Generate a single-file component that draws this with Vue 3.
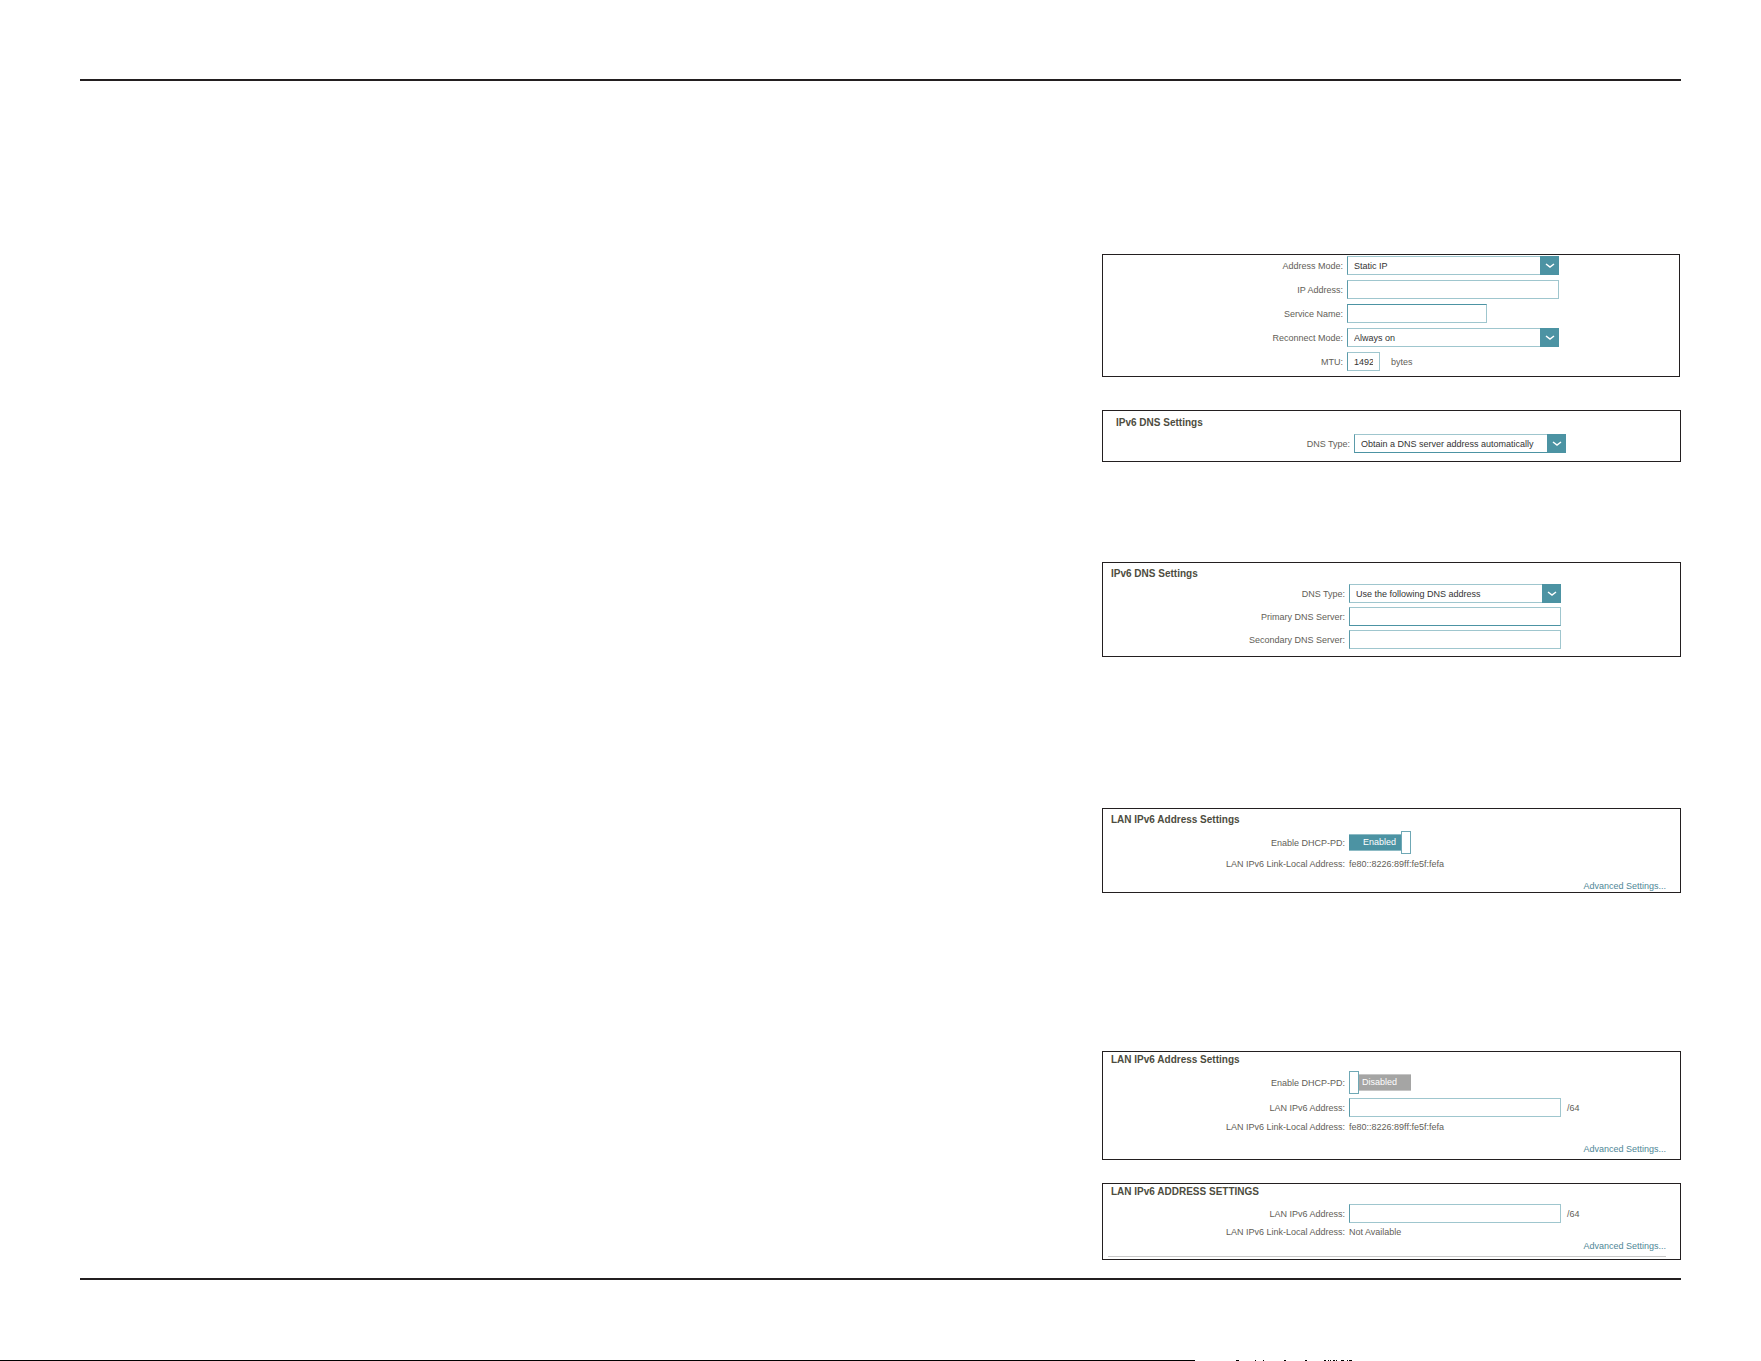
<script setup>
import { ref } from 'vue'

const addressMode = ref('Static IP')
const reconnectMode = ref('Always on')
const mtu = ref('1492')
const dnsAuto = ref('Obtain a DNS server address automatically')
const dnsManual = ref('Use the following DNS address')
const pdOn = ref(true)
const pdOff = ref(false)

// Visible tops of the clipped caption along the lower edge: [x, width]
const marks = [[0, 3], [19, 1], [27, 1], [48, 2], [69, 2], [88, 2], [92, 1], [94, 1], [97, 2], [100, 1], [105, 3], [111, 1], [113, 3]]
</script>

<template>
  <div class="page">
    <main class="sheet">
      <div class="column">
        <form class="panel mode" @submit.prevent>
          <div class="row">
            <label for="address-mode">Address Mode:</label>
            <div class="select">
              <select id="address-mode" v-model="addressMode"><option>Static IP</option></select>
              <svg viewBox="0 0 19 19" aria-hidden="true"><path d="M6 8l4 3 4-3" /></svg>
            </div>
          </div>
          <div class="row">
            <label for="ip-address">IP Address:</label>
            <input id="ip-address" type="text" class="field" />
          </div>
          <div class="row">
            <label for="service-name">Service Name:</label>
            <input id="service-name" type="text" class="field medium" />
          </div>
          <div class="row">
            <label for="reconnect">Reconnect Mode:</label>
            <div class="select">
              <select id="reconnect" v-model="reconnectMode"><option>Always on</option></select>
              <svg viewBox="0 0 19 19" aria-hidden="true"><path d="M6 8l4 3 4-3" /></svg>
            </div>
          </div>
          <div class="row">
            <label for="mtu">MTU:</label>
            <div class="with-unit mtu">
              <input id="mtu" v-model="mtu" type="text" class="field small" />
              <span>bytes</span>
            </div>
          </div>
        </form>

        <form class="panel dns-auto" @submit.prevent>
          <h2>IPv6 DNS Settings</h2>
          <div class="row">
            <label for="dns-auto">DNS Type:</label>
            <div class="select">
              <select id="dns-auto" v-model="dnsAuto"><option>Obtain a DNS server address automatically</option></select>
              <svg viewBox="0 0 19 19" aria-hidden="true"><path d="M6 8l4 3 4-3" /></svg>
            </div>
          </div>
        </form>

        <form class="panel dns-manual" @submit.prevent>
          <h2>IPv6 DNS Settings</h2>
          <div class="row">
            <label for="dns-manual">DNS Type:</label>
            <div class="select">
              <select id="dns-manual" v-model="dnsManual"><option>Use the following DNS address</option></select>
              <svg viewBox="0 0 19 19" aria-hidden="true"><path d="M6 8l4 3 4-3" /></svg>
            </div>
          </div>
          <div class="row">
            <label for="dns-primary">Primary DNS Server:</label>
            <input id="dns-primary" type="text" class="field" />
          </div>
          <div class="row">
            <label for="dns-secondary">Secondary DNS Server:</label>
            <input id="dns-secondary" type="text" class="field" />
          </div>
        </form>

        <form class="panel lan-pd" @submit.prevent>
          <h2>LAN IPv6 Address Settings</h2>
          <div class="row">
            <label for="pd-on">Enable DHCP-PD:</label>
            <div class="toggle" :class="{ on: pdOn }">
              <input id="pd-on" v-model="pdOn" type="checkbox" role="switch" />
              <span>{{ pdOn ? 'Enabled' : 'Disabled' }}</span>
            </div>
          </div>
          <div class="row">
            <span class="caption">LAN IPv6 Link-Local Address:</span>
            <span>fe80::8226:89ff:fe5f:fefa</span>
          </div>
          <a href="#" class="advanced">Advanced Settings...</a>
        </form>

        <form class="panel lan-manual" @submit.prevent>
          <h2>LAN IPv6 Address Settings</h2>
          <div class="row">
            <label for="pd-off">Enable DHCP-PD:</label>
            <div class="toggle" :class="{ on: pdOff }">
              <input id="pd-off" v-model="pdOff" type="checkbox" role="switch" />
              <span>{{ pdOff ? 'Enabled' : 'Disabled' }}</span>
            </div>
          </div>
          <div class="row">
            <label for="lan-address">LAN IPv6 Address:</label>
            <div class="with-unit">
              <input id="lan-address" type="text" class="field" />
              <span>/64</span>
            </div>
          </div>
          <div class="row">
            <span class="caption">LAN IPv6 Link-Local Address:</span>
            <span>fe80::8226:89ff:fe5f:fefa</span>
          </div>
          <a href="#" class="advanced">Advanced Settings...</a>
        </form>

        <form class="panel lan-static" @submit.prevent>
          <h2>LAN IPv6 ADDRESS SETTINGS</h2>
          <div class="row">
            <label for="lan-static">LAN IPv6 Address:</label>
            <div class="with-unit">
              <input id="lan-static" type="text" class="field" />
              <span>/64</span>
            </div>
          </div>
          <div class="row">
            <span class="caption">LAN IPv6 Link-Local Address:</span>
            <span>Not Available</span>
          </div>
          <a href="#" class="advanced">Advanced Settings...</a>
          <hr />
        </form>
      </div>
    </main>

    <footer class="edge" aria-hidden="true">
      <div class="bar"></div>
      <div class="bits">
        <svg width="120" height="1" viewBox="0 0 120 1">
          <rect v-for="[x, w] in marks" :key="x" :x="x" :width="w" y="0" height="1" />
        </svg>
      </div>
    </footer>
  </div>
</template>

<style>
body {
  margin: 0;
  background: #fff;
}
</style>

<style scoped>
.page {
  box-sizing: border-box;
  min-height: 100vh;
  display: flex;
  flex-direction: column;
  padding-top: 79px;
  font: 9px/12px "Liberation Sans", Arial, sans-serif;
  color: #626057;
}

.sheet {
  margin: 0 80px;
  padding: 173px 0 18px;
  border-top: 2px solid #231f20;
  border-bottom: 2px solid #231f20;
  display: grid;
  grid-template-columns: 1022fr 579fr;
}

.column {
  grid-column: 2;
}

.panel {
  --label: 242px;
  --gap: 4px;
  box-sizing: border-box;
  border: 1px solid #231f20;
  display: flex;
  flex-direction: column;
}

.row {
  display: grid;
  grid-template-columns: var(--label) 1fr;
  column-gap: 4px;
  align-items: center;
}

.row + .row {
  margin-top: var(--gap);
}

.row > label,
.caption {
  text-align: right;
}

h2 {
  margin: 0 8px 5px;
  font-size: 10px;
  line-height: 12px;
  color: #4d4c40;
}

.field,
.select {
  box-sizing: border-box;
  width: 212px;
  height: 19px;
  border: 1px solid #9fc6ce;
  border-left-color: #5b9baa;
  background: #fff;
}

.field {
  margin: 0;
  padding: 0 6px;
  border-radius: 0;
  font: inherit;
  color: #333;
  outline: none;
}

.medium {
  width: 140px;
  border-top-color: #4c93a3;
}

.small {
  width: 33px;
}

.select {
  display: flex;
}

.select select {
  appearance: none;
  flex: 1;
  min-width: 0;
  margin: 0 -19px 0 0;
  padding: 0 19px 0 6px;
  border: 0;
  border-radius: 0;
  background: none;
  font: inherit;
  color: #333;
}

.select svg {
  width: 19px;
  height: 19px;
  margin: -1px -1px 0 0;
  background: #4c93a3;
  pointer-events: none;
  z-index: 1;
}

.select path {
  fill: none;
  stroke: #fff;
  stroke-width: 1.5;
}

.with-unit {
  display: flex;
  align-items: center;
  gap: 6px;
}

.mtu {
  gap: 11px;
}

.toggle {
  display: flex;
  align-items: center;
  width: 62px;
}

.toggle input {
  appearance: none;
  box-sizing: border-box;
  width: 10px;
  height: 23px;
  margin: 0;
  border: 1px solid #6fa8b5;
  background: #fff;
}

.toggle span {
  box-sizing: border-box;
  flex: 1;
  height: 17px;
  padding-left: 3px;
  border: 1px solid #c6c6c6;
  border-width: 1px 0;
  line-height: 15px;
  color: #fff;
  background: #a5a5a4;
}

.toggle.on input {
  order: 1;
}

.toggle.on span {
  padding-left: 14px;
  border-color: #8dbbc5;
  background: #4c93a3;
}

.advanced {
  align-self: flex-end;
  margin: 10px 14px 0 0;
  color: #4f8797;
  text-decoration: none;
}

.mode {
  --label: 240px;
  --gap: 5px;
  padding: 1px 0 5px;
  margin-right: 1px;
}

.dns-auto {
  --label: 247px;
  margin-top: 33px;
  padding: 6px 0 8px;
}

.dns-auto h2 {
  margin-left: 13px;
}

.dns-auto .select {
  border-bottom-color: #4c93a3;
}

.dns-manual {
  margin-top: 100px;
  padding: 5px 0 7px;
}

.dns-manual h2 {
  margin-bottom: 4px;
}

#dns-primary {
  border-bottom-color: #4c93a3;
}

.lan-pd {
  margin-top: 151px;
  padding-top: 5px;
}

.lan-manual {
  margin-top: 158px;
  padding: 2px 0 4px;
}

.lan-static {
  --gap: 3px;
  margin-top: 23px;
  padding: 2px 0;
}

.lan-static h2 {
  margin-bottom: 6px;
}

.lan-static .advanced {
  margin-top: 2px;
}

hr {
  align-self: stretch;
  height: 1px;
  margin: 4px 14px 0 5px;
  border: 0;
  background: #c8c8c8;
}

.edge {
  margin-top: auto;
  display: grid;
  grid-template-columns: 1195fr 566fr;
  height: 1px;
}

.bar {
  background: #000;
}

.bits {
  padding-left: 41px;
}

.bits svg {
  display: block;
}
</style>
